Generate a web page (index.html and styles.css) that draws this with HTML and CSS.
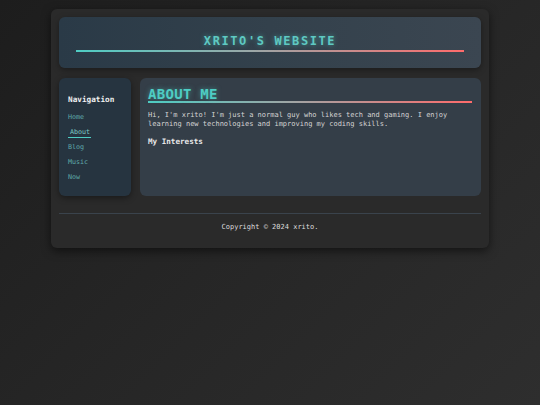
FILE: index.html
```html
<!DOCTYPE html>
<html lang="en">
<head>
<meta charset="utf-8">
<title>xrito's website</title>
<link rel="stylesheet" href="styles.css">
</head>
<body>
<div class="container">
  <header class="site-header">
    <h1 class="site-title">XRITO'S WEBSITE</h1>
  </header>
  <div class="layout">
    <nav class="sidebar">
      <h3 class="nav-title">Navigation</h3>
      <ul class="nav-list">
        <li><a class="nav-link" href="#">Home</a></li>
        <li><a class="nav-link active" href="#">About</a></li>
        <li><a class="nav-link" href="#">Blog</a></li>
        <li><a class="nav-link" href="#">Music</a></li>
        <li><a class="nav-link" href="#">Now</a></li>
      </ul>
    </nav>
    <main class="content">
      <h2 class="section-title">ABOUT ME</h2>
      <p class="intro">Hi, I'm xrito! I'm just a normal guy who likes tech and gaming. I enjoy learning new technologies and improving my coding skills.</p>
      <h3 class="sub-title">My Interests</h3>
    </main>
  </div>
  <footer class="site-footer">
    <p class="copyright">Copyright © 2024 xrito.</p>
  </footer>
</div>
</body>
</html>
```

FILE: styles.css
```css
html, body {
  margin: 0;
  padding: 0;
}
body {
  min-height: 405px;
  background: linear-gradient(135deg, #1d1d1d 0%, #262626 50%, #2e2e2e 100%);
  font-family: "DejaVu Sans Mono", "Liberation Mono", monospace;
  color: #dddddd;
}
.container {
  width: 422px;
  margin: 9px auto 0;
  padding: 8px;
  background: #2a2a2a;
  border-radius: 6px;
  box-shadow: 0 3px 10px rgba(0, 0, 0, 0.55);
}
.site-header {
  padding: 18px 17px 16px;
  background: linear-gradient(90deg, #2a3a47 0%, #33414c 50%, #3b4651 100%);
  border-radius: 6px;
  box-shadow: 0 2px 6px rgba(0, 0, 0, 0.35);
}
.site-title {
  margin: 0;
  padding-bottom: 2px;
  font-size: 12px;
  line-height: 13px;
  font-weight: bold;
  letter-spacing: 1.6px;
  text-align: center;
  color: #5fc9c2;
  text-shadow: 0 0 5px rgba(78, 205, 196, 0.6);
  border-bottom: 2px solid transparent;
  border-image: linear-gradient(90deg, #4ecdc4, #9aa8a8 45%, #ff6b6b) 1;
}
.layout {
  display: flex;
  gap: 9px;
  margin-top: 10px;
}
.sidebar {
  width: 72px;
  box-sizing: border-box;
  height: 118px;
  padding: 17px 9px 8px;
  background: #263440;
  border-radius: 6px;
  box-shadow: 0 2px 6px rgba(0, 0, 0, 0.4);
}
.nav-title {
  margin: 0 0 1px;
  font-size: 7.7px;
  line-height: 10px;
  font-weight: bold;
  color: #f0f0f0;
}
.nav-list {
  list-style: none;
  margin: 0;
  padding: 0;
}
.nav-list li {
  height: 15px;
  line-height: 15px;
}
.nav-link {
  font-size: 6.7px;
  color: #5fa9a9;
  text-decoration: none;
}
.nav-link.active {
  padding: 1px 1px 1px 2px;
  color: #7cc9c4;
  border-bottom: 1px solid #4ecdc4;
}
.content {
  flex: 1;
  height: 118px;
  box-sizing: border-box;
  padding: 10px 9px 8px 8px;
  background: #343e48;
  border-radius: 6px;
}
.section-title {
  margin: 0;
  font-size: 14px;
  line-height: 13px;
  font-weight: bold;
  letter-spacing: 0.3px;
  color: #4ecdc4;
  text-shadow: 0 0 5px rgba(78, 205, 196, 0.55);
  border-bottom: 2px solid transparent;
  border-image: linear-gradient(90deg, #4ecdc4, #a0a4a4 45%, #ff6b6b) 1;
}
.intro {
  margin: 8px 0 0;
  font-size: 7px;
  line-height: 9px;
  color: #d4d4d4;
}
.sub-title {
  margin: 8px 0 0;
  font-size: 7.6px;
  line-height: 10px;
  font-weight: bold;
  color: #e8e8e8;
}
.site-footer {
  margin-top: 17px;
  padding: 9px 0 8px;
  border-top: 1px solid #3a434c;
  text-align: center;
}
.copyright {
  margin: 0;
  font-size: 7px;
  line-height: 9px;
  color: #dcdcdc;
}
```
